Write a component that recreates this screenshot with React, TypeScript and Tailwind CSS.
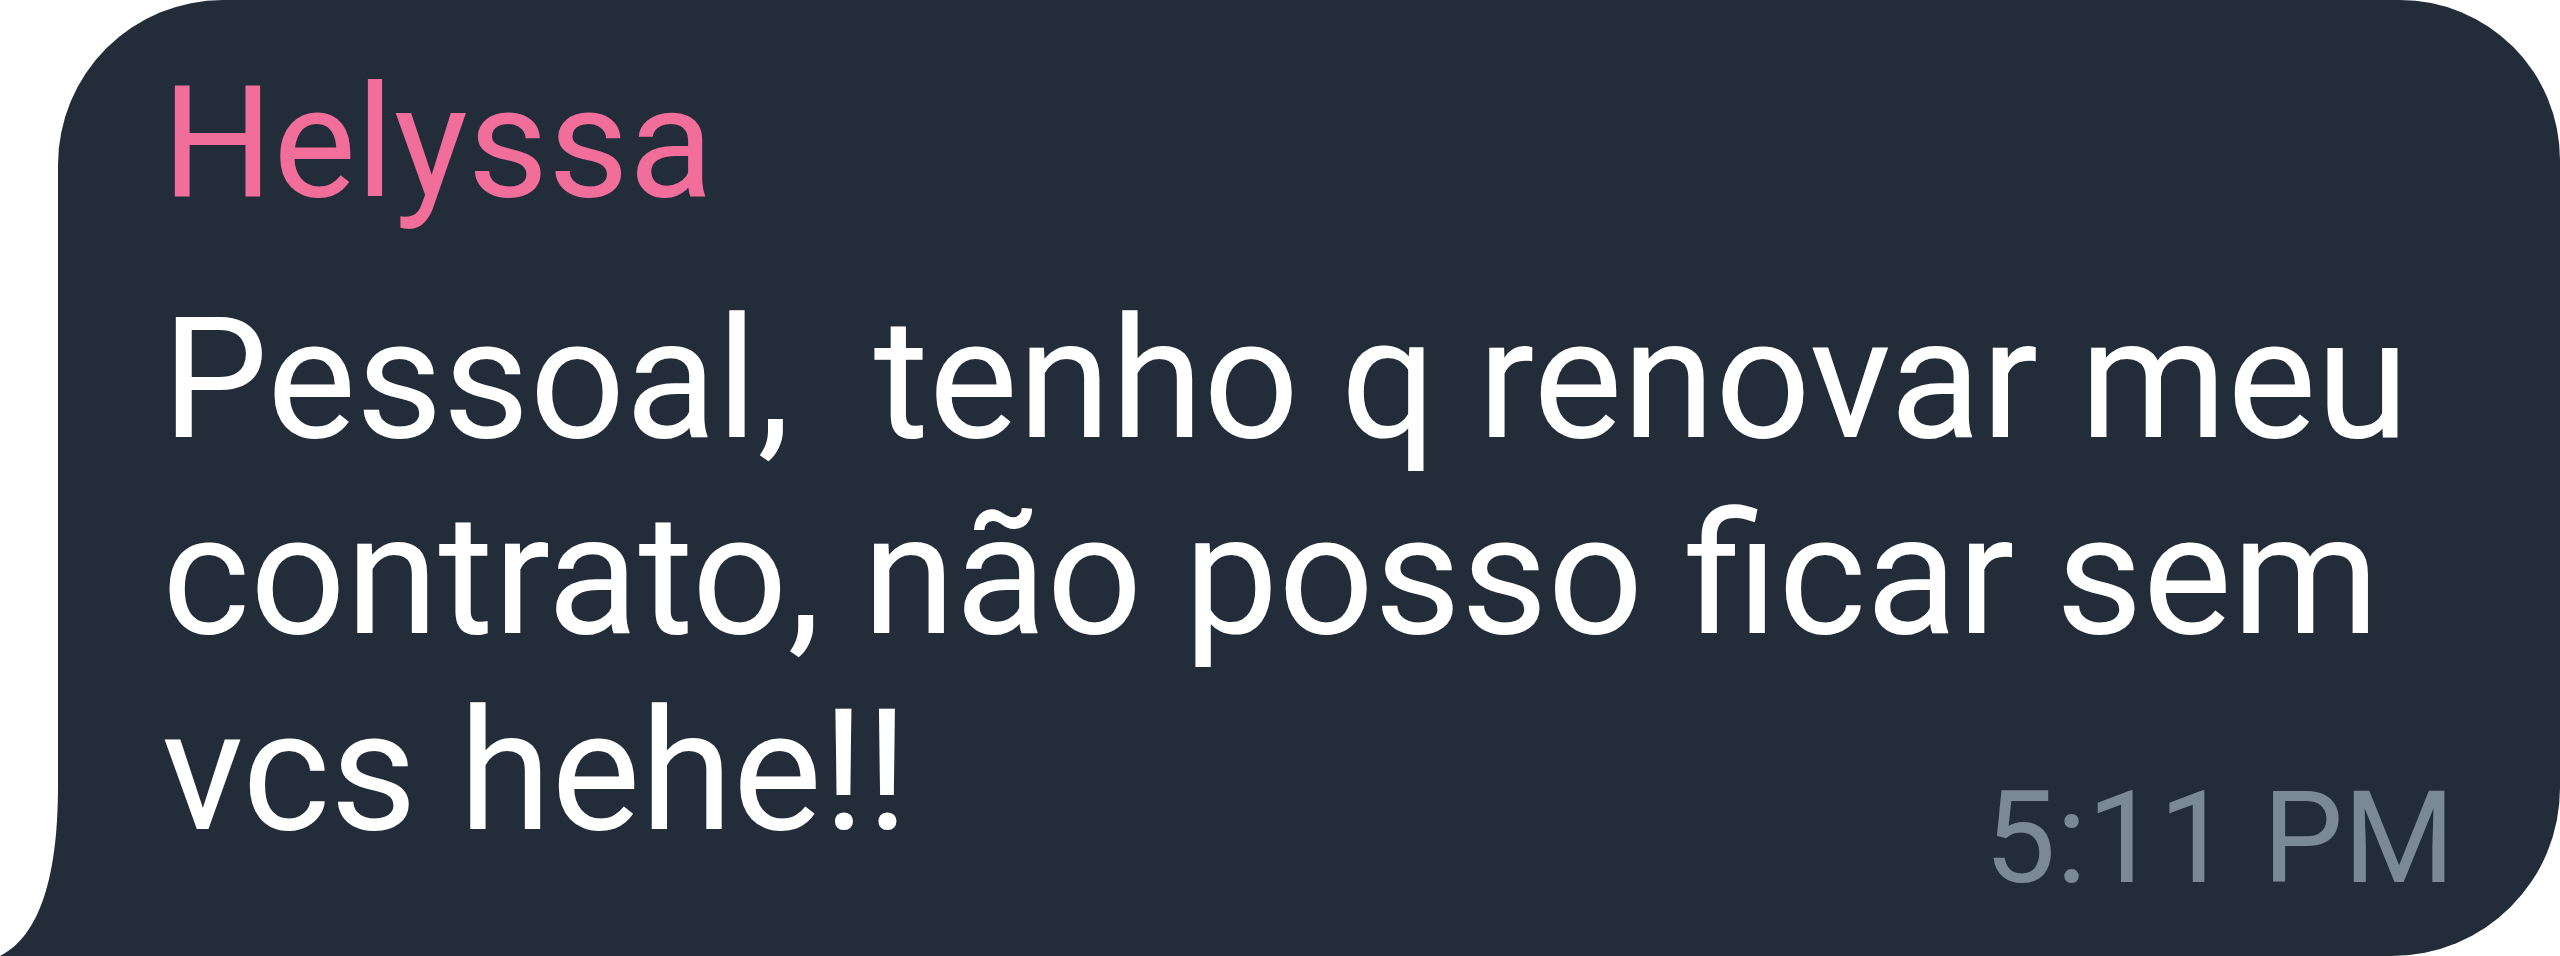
const MessageBubble = () => {
  return (
    <div className="flex w-[2560px] items-end bg-white">
      {/* tail on the bottom-left */}
      <svg width="58" height="170" viewBox="0 0 58 170" className="block shrink-0">
        <path d="M58 0 C58 90 40 150 0 170 L58 170 Z" fill="#222d39" />
      </svg>
      <div className="w-[2502px] rounded-tl-[165px] rounded-tr-[160px] rounded-br-[168px] bg-[#222d39] pt-[50px] pr-[105px] pb-[43px] pl-[104px] font-['Roboto',sans-serif]">
        <div className="text-[156px] leading-[186px] text-[#f06e99]">Helyssa</div>
        <div className="mt-[46px] grid">
          <p className="col-start-1 row-start-1 whitespace-pre-wrap pb-[43px] text-[168px] leading-[196px] text-white">
            {"Pessoal,  tenho q renovar meu contrato, não posso ficar sem vcs hehe!!"}
          </p>
          <span className="col-start-1 row-start-1 self-end justify-self-end text-[128px] leading-[150px] text-[#7b8997]">
            5:11 PM
          </span>
        </div>
      </div>
    </div>
  );
};

export default function App() {
  return <MessageBubble />;
}
